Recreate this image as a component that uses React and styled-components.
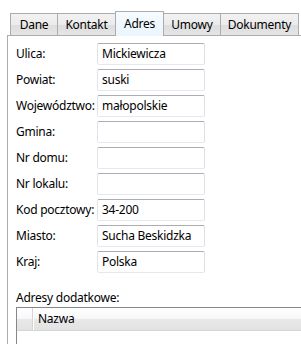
import React from 'react';
import styled, { createGlobalStyle } from 'styled-components';

const GlobalStyle = createGlobalStyle`
  body {
    margin: 0;
    background: #ffffff;
    font-family: "Noto Sans", "Open Sans", sans-serif;
    font-size: 12px;
    letter-spacing: -0.25px;
    color: #000000;
  }
`;

const Window = styled.div`
  width: 301px;
  height: 344px;
  overflow: hidden;
  padding: 11px 0 0 7px;
  box-sizing: border-box;
`;

const TabStrip = styled.div`
  display: flex;
  align-items: flex-end;
  height: 24px;
  padding-left: 3px;
`;

const Tab = styled.div`
  position: relative;
  z-index: ${p => (p.$active ? 2 : 1)};
  box-sizing: border-box;
  width: ${p => p.$width}px;
  height: ${p => (p.$active ? 25 : 22)}px;
  margin-left: -1px;
  margin-bottom: ${p => (p.$active ? -1 : 0)}px;
  border: 1px solid #acacac;
  border-bottom: none;
  background: ${p =>
    p.$active
      ? 'linear-gradient(#f6fbfe, #eaf5fd)'
      : 'linear-gradient(#f2f2f2, #ebebeb 50%, #dddddd 51%, #e5e5e5)'};
  display: flex;
  align-items: center;
  justify-content: center;
  padding-bottom: ${p => (p.$active ? 2 : 0)}px;
  &:first-child {
    margin-left: 0;
  }
`;

const Panel = styled.div`
  border-top: 1px solid #acacac;
  border-left: 1px solid #acacac;
  height: 320px;
  padding: 7px 0 0 8px;
  box-sizing: border-box;
`;

const Form = styled.div`
  display: grid;
  grid-template-columns: 81px 108px;
  grid-auto-rows: 22px;
  row-gap: 4px;
  align-items: center;
`;

const Label = styled.div`
  white-space: nowrap;
  padding-bottom: 1px;
`;

const Field = styled.div`
  box-sizing: border-box;
  height: 22px;
  border: 1px solid;
  border-color: #abadb3 #dbdfe6 #e3e9ef #e2e3ea;
  border-radius: 2px;
  padding: 0 4px;
  display: flex;
  align-items: center;
  padding-bottom: 1px;
  white-space: nowrap;
`;

const SectionLabel = styled.div`
  margin-top: 16px;
  height: 18px;
  line-height: 18px;
`;

const Grid = styled.div`
  border-top: 1px solid #828790;
  border-left: 1px solid #828790;
  height: 60px;
`;

const HeaderRow = styled.div`
  display: flex;
  height: 22px;
  border-bottom: 1px solid #d5d5d5;
  background: linear-gradient(#ffffff, #f7f7f8 50%, #e8e8e9 51%, #e3e3e4);
`;

const RowHeader = styled.div`
  width: 15px;
  border-right: 1px solid #d5d5d5;
  box-shadow: 1px 0 0 #ffffff;
`;

const ColumnHeader = styled.div`
  display: flex;
  align-items: center;
  padding-left: 5px;
  padding-bottom: 1px;
`;

const fields = [
  { label: 'Ulica:', value: 'Mickiewicza' },
  { label: 'Powiat:', value: 'suski' },
  { label: 'Województwo:', value: 'małopolskie' },
  { label: 'Gmina:', value: '' },
  { label: 'Nr domu:', value: '' },
  { label: 'Nr lokalu:', value: '' },
  { label: 'Kod pocztowy:', value: '34-200' },
  { label: 'Miasto:', value: 'Sucha Beskidzka' },
  { label: 'Kraj:', value: 'Polska' },
];

const tabs = [
  { name: 'Dane', width: 48 },
  { name: 'Kontakt', width: 59 },
  { name: 'Adres', width: 49, active: true },
  { name: 'Umowy', width: 58 },
  { name: 'Dokumenty', width: 79 },
];

const App = () => (
  <Window>
    <GlobalStyle />
    <TabStrip>
      {tabs.map(t => (
        <Tab key={t.name} $width={t.width} $active={t.active}>
          {t.name}
        </Tab>
      ))}
    </TabStrip>
    <Panel>
      <Form>
        {fields.map(f => (
          <React.Fragment key={f.label}>
            <Label>{f.label}</Label>
            <Field>{f.value}</Field>
          </React.Fragment>
        ))}
      </Form>
      <SectionLabel>Adresy dodatkowe:</SectionLabel>
      <Grid>
        <HeaderRow>
          <RowHeader />
          <ColumnHeader>Nazwa</ColumnHeader>
        </HeaderRow>
      </Grid>
    </Panel>
  </Window>
);

export default App;
